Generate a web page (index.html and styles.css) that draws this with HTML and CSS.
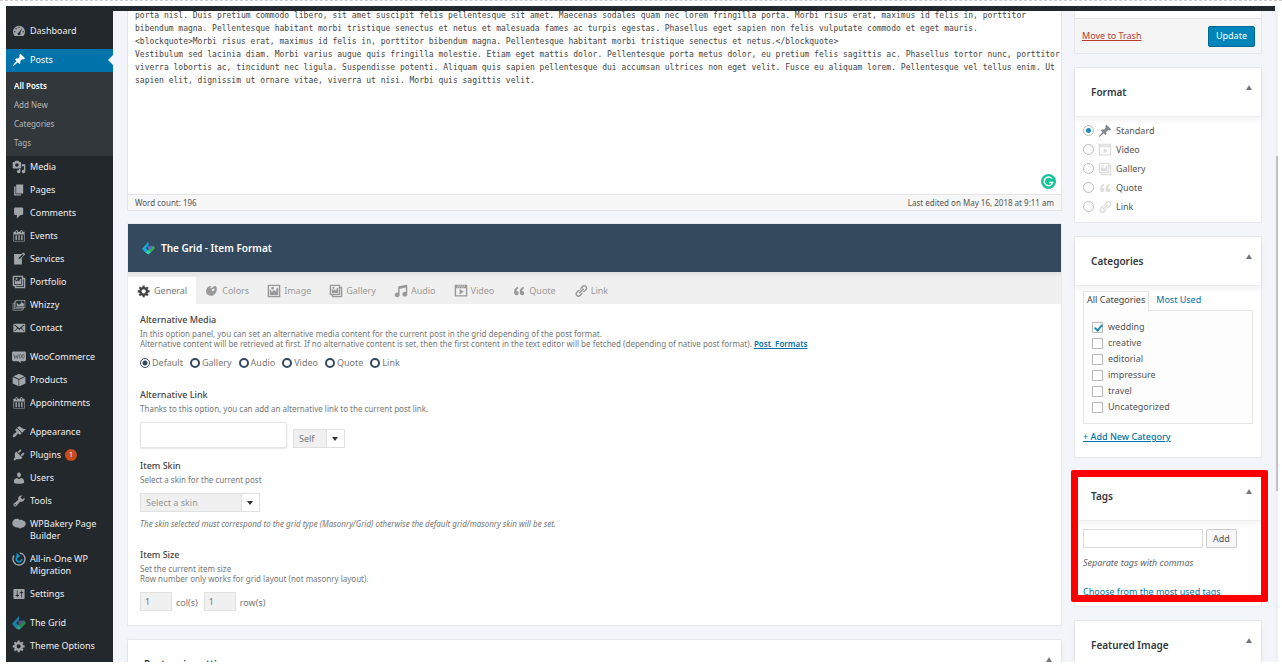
FILE: index.html
```html
<!DOCTYPE html>
<html lang="en">
<head>
    <meta charset="UTF-8">
    <title>Edit Post</title>
    <link rel="stylesheet" href="styles.css">
</head>
<body>
    <svg class="sprite" aria-hidden="true">
        <symbol id="i-dashboard" viewBox="0 0 20 20"><path fill-rule="evenodd" d="M3.8 17h12.4A8.6 8.6 0 1 0 3.8 17zM10 3.5a1 1 0 1 1 0 2 1 1 0 0 1 0-2zM5.8 5.4a1 1 0 1 1 0 2 1 1 0 0 1 0-2zM4 10a1 1 0 1 1 0 2 1 1 0 0 1 0-2zm12 0a1 1 0 1 1 0 2 1 1 0 0 1 0-2zm-1.2-4.4-3 7.4a2 2 0 1 1-2.2-1z"/></symbol>
        <symbol id="i-pin" viewBox="0 0 20 20"><path d="M10.44 3.02l1.82-1.82 6.36 6.35-1.83 1.82c-1.05-.68-2.48-.57-3.41.36l-.75.75c-.92.93-1.04 2.35-.35 3.41l-1.83 1.82-2.41-2.41-2.8 2.79c-.42.42-3.38 2.71-3.8 2.29s1.86-3.39 2.28-3.81l2.79-2.79L4.1 9.36l1.83-1.82c1.05.69 2.48.57 3.4-.36l.75-.75c.93-.92 1.05-2.35.36-3.41z"/></symbol>
        <symbol id="i-media" viewBox="0 0 20 20"><path d="M13 11V4c0-.55-.45-1-1-1h-1.67L9 1H5L3.67 3H2c-.55 0-1 .45-1 1v7c0 .55.45 1 1 1h10c.55 0 1-.45 1-1zM7 4.5c1.38 0 2.5 1.12 2.5 2.5S8.38 9.5 7 9.5 4.5 8.38 4.5 7 5.62 4.5 7 4.5zM14 6h5v10.5c0 1.38-1.12 2.5-2.5 2.5S14 17.88 14 16.5s1.12-2.5 2.5-2.5c.17 0 .34.02.5.05V9h-3V6zm-4 8.05V13h2v3.5c0 1.38-1.12 2.5-2.5 2.5S7 17.88 7 16.5 8.12 14 9.5 14c.17 0 .34.02.5.05z"/></symbol>
        <symbol id="i-pages" viewBox="0 0 20 20"><path d="M6 15V2h10v13H6zm-1 1h8v2H3V5h2v11z"/></symbol>
        <symbol id="i-comment" viewBox="0 0 20 20"><path d="M5 2h9c1.1 0 2 .9 2 2v7c0 1.1-.9 2-2 2h-2l-5 5v-5H5c-1.1 0-2-.9-2-2V4c0-1.1.9-2 2-2z"/></symbol>
        <symbol id="i-calendar" viewBox="0 0 20 20"><path d="M15 4h3v14H2V4h3V3c0-.83.67-1.5 1.5-1.5S8 2.17 8 3v1h4V3c0-.83.67-1.5 1.5-1.5S15 2.17 15 3v1zM6 3v2.5c0 .28.22.5.5.5s.5-.22.5-.5V3c0-.28-.22-.5-.5-.5S6 2.72 6 3zm7 0v2.5c0 .28.22.5.5.5s.5-.22.5-.5V3c0-.28-.22-.5-.5-.5s-.5.22-.5.5zm4 14V8H3v9h14zM7 16V9H5v7h2zm4 0V9H9v7h2zm4 0V9h-2v7h2z"/></symbol>
        <symbol id="i-write" viewBox="0 0 20 20"><path d="M16.89 1.2l1.41 1.41c.39.39.39 1.02 0 1.41L14 8.33V18H3V3h10.67l1.8-1.8c.4-.39 1.03-.4 1.42 0zm-5.66 8.48l5.37-5.36-1.42-1.42-5.36 5.37-.71 2.12z"/></symbol>
        <symbol id="i-gallery" viewBox="0 0 20 20"><path d="M16 4h1.96c.57 0 1.04.47 1.04 1.04v12.92c0 .57-.47 1.04-1.04 1.04H5.04C4.47 19 4 18.53 4 17.96V16H2.04C1.47 16 1 15.53 1 14.96V2.04C1 1.47 1.47 1 2.04 1h12.92c.57 0 1.04.47 1.04 1.04V4zM3 14h11V3H3v11zm5-8.5C8 4.67 7.33 4 6.5 4S5 4.67 5 5.5 5.67 7 6.5 7 8 6.33 8 5.5zm2 4.5s1-5 3-5v8H4V7c2 0 2 3 2 3s.33-2 2-2 2 2 2 2zm7 7V6h-1v8.96c0 .57-.47 1.04-1.04 1.04H6v1h11z"/></symbol>
        <symbol id="i-slides" viewBox="0 0 20 20"><path fill-rule="evenodd" d="M5 3h14v11h-2v2h-2v2H1V7h2V5h2zM6 4v9h12V4zM4 6v9h12v-1H5V6zM2 8v9h12v-1H3V8zM7 12V7.500c2 0 2 2 3 2s2-2.500 4-2.500 2 1 3 1v4zM14 5a1 1 0 1 1 0 2 1 1 0 0 1 0-2z"/></symbol>
        <symbol id="i-mail" viewBox="0 0 20 20"><path d="M19 14.500v-9c0-.83-.67-1.500-1.500-1.500H3.490c-.83 0-1.500.67-1.500 1.500v9c0 .83.67 1.500 1.500 1.500H17.500c.83 0 1.500-.67 1.500-1.500zm-1.310-9.110c.33.33.15.67-.03.84L13.600 9.950l3.900 4.060c.12.14.2.36.06.51-.13.16-.43.15-.56.05l-4.370-3.730-2.140 1.950-2.130-1.950-4.370 3.730c-.13.1-.43.11-.56-.05-.14-.15-.06-.37.06-.51l3.900-4.060-4.060-3.720c-.18-.17-.36-.51-.03-.84s.67-.17.95.07l6.240 5.040 6.250-5.040c.28-.24.61-.4.94-.07z"/></symbol>
        <symbol id="i-woo" viewBox="0 0 20 20"><path d="M2 2h16c1 0 2 1 2 2v10c0 1-1 2-2 2h-6l1 3-4-3H2c-1 0-2-1-2-2V4c0-1 1-2 2-2z"/><g fill="none" stroke="#5b6167" stroke-width="1.300"><path d="M2.500 6l1.500 6 2-4 1.500 4 1.500-6"/><ellipse cx="11.800" cy="9" rx="1.600" ry="2.600"/><ellipse cx="16" cy="9" rx="1.600" ry="2.600"/></g></symbol>
        <symbol id="i-box" viewBox="0 0 20 20"><path d="M10 1l8 3.500L10 8.500 2 4.500zM1 5.800l8.400 4V19L1 15zM19 5.800l-8.400 4V19L19 15z"/><path d="M1 5.500l9 4.500v9l9-4V5.500L10 10z" opacity=".6"/></symbol>
        <symbol id="i-brush" viewBox="0 0 20 20"><path d="M14.480 11.060L7.410 3.990l1.500-1.500c.5-.56 2.300-.47 3.510.32 1.210.8 1.430 1.280 2.910 2.100 1.180.64 2.450 1.260 4.450.85zm-.71.71L6.700 4.700 4.930 6.470c-.39.39-.39 1.020 0 1.410l1.060 1.060c.39.39.39 1.030 0 1.420-.6.6-1.430 1.110-2.210 1.690-.35.26-.7.53-1.010.84C1.430 14.230.4 16.080 1.400 17.070c.99 1 2.840-.03 4.180-1.360.31-.31.58-.66.85-1.020.57-.78 1.080-1.610 1.690-2.210.39-.39 1.020-.39 1.410 0l1.060 1.060c.39.39 1.020.39 1.410 0z"/></symbol>
        <symbol id="i-plug" viewBox="0 0 20 20"><path d="M13.110 4.360L9.870 7.600 8 5.730l3.240-3.240c.35-.34 1.050-.2 1.560.32.52.51.66 1.210.31 1.550zm-8 1.770l.91-1.120 9.010 9.010-1.190.84c-.71.71-2.630 1.160-3.820 1.160H6.140L4.900 17.260c-.59.59-1.540.59-2.120 0-.59-.58-.59-1.530 0-2.120l1.240-1.240v-3.880c0-1.130.4-3.190 1.090-3.890zm7.260 3.970l3.240-3.240c.34-.35 1.040-.21 1.550.31.52.51.66 1.210.31 1.550l-3.240 3.250z"/></symbol>
        <symbol id="i-user" viewBox="0 0 20 20"><path d="M10 9.250c-2.270 0-2.730-3.440-2.730-3.440C7 4.020 7.820 2 9.970 2c2.160 0 2.980 2.020 2.710 3.810 0 0-.41 3.440-2.680 3.440zm0 2.570L12.720 10c2.390 0 4.520 2.330 4.520 4.530v2.490s-3.650 1.130-7.240 1.130c-3.650 0-7.240-1.130-7.240-1.130v-2.490c0-2.250 1.940-4.480 4.470-4.480z"/></symbol>
        <symbol id="i-wrench" viewBox="0 0 20 20"><path d="M16.680 9.770c-1.340 1.340-3.300 1.670-4.950.99l-5.410 6.520c-.99.99-2.590.99-3.580 0s-.99-2.590 0-3.570l6.520-5.420c-.68-1.650-.35-3.610.99-4.950 1.280-1.280 3.120-1.620 4.720-1.060l-2.890 2.890 2.820 2.820 2.860-2.870c.53 1.580.18 3.390-1.080 4.650zM3.810 16.210c.4.39 1.040.39 1.430 0 .4-.4.4-1.040 0-1.430-.39-.4-1.030-.4-1.430 0-.39.39-.39 1.030 0 1.430z"/></symbol>
        <symbol id="i-bakery" viewBox="0 0 20 20"><path d="M6 3c2-1 4 0 5 1.500 2-1 4-.5 5 1 3 .5 4 3 3.500 5-.5 3-3 5-5.500 4.500-1 2-4 1.500-5 0-4 .5-8-1.500-8.500-5C0 6 3 3 6 3z"/></symbol>
        <symbol id="i-migrate" viewBox="0 0 20 20"><g fill="none" stroke-width="2"><path d="M3 5A8.500 8.500 0 0 0 10 18.500 8.500 8.500 0 0 0 18.500 10 8.500 8.500 0 0 0 11 1.500"/><path stroke="#0a9ad7" stroke-width="2.400" d="M14 10a4 4 0 1 1-4-4"/></g><path fill="#0a9ad7" stroke="none" d="M6 1l6 5-5 3z"/></symbol>
        <symbol id="i-sliders" viewBox="0 0 20 20"><path d="M18 16V4c0-.55-.45-1-1-1H3c-.55 0-1 .45-1 1v12c0 .55.45 1 1 1h14c.55 0 1-.45 1-1zM8 11h1c.55 0 1 .45 1 1s-.45 1-1 1H8v1.500c0 .28-.22.5-.5.5s-.5-.22-.5-.5V13H6c-.55 0-1-.45-1-1s.45-1 1-1h1V5.500c0-.28.22-.5.5-.5s.5.22.5.5V11zm5-2h-1c-.55 0-1-.45-1-1s.45-1 1-1h1V5.500c0-.28.22-.5.5-.5s.5.22.5.5V7h1c.55 0 1 .45 1 1s-.45 1-1 1h-1v5.500c0 .28-.22.5-.5.5s-.5-.22-.5-.5V9z"/></symbol>
        <symbol id="i-grid" viewBox="0 0 20 20"><path fill="#14a7dd" d="M10 0v6L6 10l3 3-4 4-5-6z"/><path fill="#35d0ba" d="M9 13l-4 4 5 3 4-4z"/><path fill="#2fb457" d="M20 10l-6 6.500L9 13l5-2 3-5z"/><path fill="#6a6fc0" d="M9 7.500L17 6l-3 5-4 2z"/></symbol>
        <symbol id="i-gear" viewBox="0 0 20 20"><path d="M18 12h-2.180c-.17.7-.44 1.350-.81 1.930l1.540 1.540-2.100 2.100-1.540-1.540c-.58.36-1.230.63-1.910.79V19H8v-2.180c-.68-.16-1.330-.43-1.910-.79l-1.540 1.540-2.120-2.120 1.540-1.540c-.36-.58-.63-1.230-.79-1.910H1V9.030h2.170c.16-.7.44-1.350.8-1.940L2.430 5.550l2.100-2.100 1.540 1.540c.58-.37 1.240-.64 1.930-.81V2h3v2.180c.68.16 1.330.43 1.910.79l1.540-1.540 2.120 2.120-1.540 1.540c.36.59.64 1.240.8 1.940H18V12zm-8.500 1.500c1.660 0 3-1.340 3-3s-1.340-3-3-3-3 1.340-3 3 1.340 3 3 3z"/></symbol>
        <symbol id="i-art" viewBox="0 0 20 20"><path d="M8.550 3.060c1.010.34-1.950 2.010-.1 3.130 1.040.63 3.310-2.220 4.450-2.860.97-.54 2.670-.65 3.530 1.230 1.090 2.380.14 8.570-3.790 11.060-3.970 2.500-8.970 1.230-10.700-2.660-2.010-4.530 3.120-11.090 6.610-9.900zm1.210 6.450c.73 1.640 4.700-.5 3.790-2.800-.59-1.490-4.480 1.250-3.790 2.800z"/></symbol>
        <symbol id="i-image" viewBox="0 0 20 20"><path d="M2.250 1h15.500c.69 0 1.250.56 1.250 1.250v15.500c0 .69-.56 1.250-1.250 1.250H2.250C1.560 19 1 18.440 1 17.750V2.250C1 1.560 1.560 1 2.250 1zM17 17V3H3v14h14zM10 6c0-1.100-.9-2-2-2s-2 .9-2 2 .9 2 2 2 2-.9 2-2zm3 5s0-6 3-6v10c0 .55-.45 1-1 1H5c-.55 0-1-.45-1-1V8c2 0 3 4 3 4s1-3 3-3 3 2 3 2z"/></symbol>
        <symbol id="i-audio" viewBox="0 0 20 20"><path d="M6.990 3.080l11.020-2c.55-.08.99.45.99 1V14.500c0 1.940-1.570 3.500-3.500 3.500S12 16.440 12 14.500c0-1.930 1.570-3.500 3.500-3.500.54 0 1.040.14 1.500.35V5.080l-9 2V16c-.24 1.700-1.740 3-3.500 3C2.570 19 1 17.440 1 15.500 1 13.570 2.570 12 4.500 12c.54 0 1.040.14 1.500.35V4.080c0-.55.44-.91.99-1z"/></symbol>
        <symbol id="i-video" viewBox="0 0 20 20"><path d="M2 1h16c.55 0 1 .45 1 1v16l-18-.02V2c0-.55.45-1 1-1zm4 1L4 5h1l2-3H6zm4 0H9L7 5h1zm3 0h-1l-2 3h1zm3 0h-1l-2 3h1zm1 14V6H3v10h14zM8 7l6 4-6 4V7z"/></symbol>
        <symbol id="i-quote" viewBox="0 0 20 20"><path d="M9.490 13.220c0-.74-.2-1.380-.61-1.900-.62-.78-1.830-.88-2.530-.72-.29-1.650 1.110-3.750 2.920-4.650L7.880 4c-2.730 1.300-5.420 4.280-4.960 8.050C3.210 14.430 4.590 16 6.540 16c.85 0 1.560-.25 2.120-.75s.83-1.180.83-2.030zm8.050 0c0-.74-.2-1.380-.61-1.900-.63-.78-1.830-.88-2.530-.72-.29-1.650 1.110-3.750 2.920-4.650L15.930 4c-2.730 1.300-5.410 4.280-4.950 8.050.29 2.380 1.660 3.950 3.610 3.950.85 0 1.560-.25 2.120-.75s.83-1.180.83-2.030z"/></symbol>
        <symbol id="i-link" viewBox="0 0 20 20"><path d="M17.740 2.760c1.680 1.690 1.680 4.410 0 6.100l-1.530 1.520c-1.120 1.120-2.700 1.470-4.140 1.090l2.620-2.610.76-.77.76-.76c.84-.84.84-2.200 0-3.040-.84-.85-2.200-.85-3.040 0l-.77.76-3.380 3.380c-.37-1.440-.02-3.020 1.100-4.140l1.520-1.530c1.690-1.680 4.420-1.680 6.100 0zM8.590 13.430l5.340-5.340c.42-.42.42-1.100 0-1.520-.44-.43-1.130-.39-1.530 0l-5.330 5.340c-.42.42-.42 1.100 0 1.520.44.43 1.130.39 1.520 0zm-.76 2.290l4.140-4.150c.38 1.440.03 3.020-1.090 4.140l-1.520 1.530c-1.690 1.680-4.410 1.680-6.100 0-1.680-1.680-1.680-4.420 0-6.100l1.530-1.520c1.120-1.120 2.700-1.470 4.140-1.100l-4.140 4.150c-.85.84-.85 2.200 0 3.050.84.84 2.200.84 3.040 0z"/></symbol>
    </svg>

    <div class="app">
        <div class="adminbar"></div>
        <div class="wrap">
            <nav class="menu">
                <a class="item first" href="#"><svg class="icon"><use href="#i-dashboard"/></svg>Dashboard</a>
                <a class="item current" href="#"><svg class="icon"><use href="#i-pin"/></svg>Posts</a>
                <div class="submenu">
                    <a class="active" href="#">All Posts</a>
                    <a href="#">Add New</a>
                    <a href="#">Categories</a>
                    <a href="#">Tags</a>
                </div>
                <a class="item" href="#"><svg class="icon"><use href="#i-media"/></svg>Media</a>
                <a class="item" href="#"><svg class="icon"><use href="#i-pages"/></svg>Pages</a>
                <a class="item" href="#"><svg class="icon"><use href="#i-comment"/></svg>Comments</a>
                <a class="item" href="#"><svg class="icon"><use href="#i-calendar"/></svg>Events</a>
                <a class="item" href="#"><svg class="icon"><use href="#i-write"/></svg>Services</a>
                <a class="item" href="#"><svg class="icon"><use href="#i-gallery"/></svg>Portfolio</a>
                <a class="item" href="#"><svg class="icon"><use href="#i-slides"/></svg>Whizzy</a>
                <a class="item" href="#"><svg class="icon"><use href="#i-mail"/></svg>Contact</a>
                <a class="item sep" href="#"><svg class="icon"><use href="#i-woo"/></svg>WooCommerce</a>
                <a class="item" href="#"><svg class="icon"><use href="#i-box"/></svg>Products</a>
                <a class="item" href="#"><svg class="icon"><use href="#i-calendar"/></svg>Appointments</a>
                <a class="item sep" href="#"><svg class="icon"><use href="#i-brush"/></svg>Appearance</a>
                <a class="item" href="#"><svg class="icon"><use href="#i-plug"/></svg>Plugins <span class="count">1</span></a>
                <a class="item" href="#"><svg class="icon"><use href="#i-user"/></svg>Users</a>
                <a class="item" href="#"><svg class="icon"><use href="#i-wrench"/></svg>Tools</a>
                <a class="item" href="#"><svg class="icon"><use href="#i-bakery"/></svg>WPBakery Page Builder</a>
                <a class="item" href="#"><svg class="icon icon-line"><use href="#i-migrate"/></svg>All-in-One WP Migration</a>
                <a class="item" href="#"><svg class="icon"><use href="#i-sliders"/></svg>Settings</a>
                <a class="item sep" href="#"><svg class="icon dim"><use href="#i-grid"/></svg>The Grid</a>
                <a class="item" href="#"><svg class="icon"><use href="#i-gear"/></svg>Theme Options</a>
            </nav>

            <main class="content">
                <div class="editor">
                    <textarea class="editor-text" aria-label="Post content" spellcheck="false">porta nisl. Duis pretium commodo libero, sit amet suscipit felis pellentesque sit amet. Maecenas sodales quam nec lorem fringilla porta. Morbi risus erat, maximus id felis in, porttitor
bibendum magna. Pellentesque habitant morbi tristique senectus et netus et malesuada fames ac turpis egestas. Phasellus eget sapien non felis vulputate commodo et eget mauris.
&lt;blockquote&gt;Morbi risus erat, maximus id felis in, porttitor bibendum magna. Pellentesque habitant morbi tristique senectus et netus.&lt;/blockquote&gt;
Vestibulum sed lacinia diam. Morbi varius augue quis fringilla molestie. Etiam eget mattis dolor. Pellentesque porta metus dolor, eu pretium felis sagittis ac. Phasellus tortor nunc, porttitor
viverra lobortis ac, tincidunt nec ligula. Suspendisse potenti. Aliquam quis sapien pellentesque dui accumsan ultrices non eget velit. Fusce eu aliquam lorem. Pellentesque vel tellus enim. Ut
sapien elit, dignissim ut ornare vitae, viverra ut nisi. Morbi quis sagittis velit.</textarea>
                    <svg class="checker" viewBox="0 0 16 16" aria-hidden="true"><circle cx="8" cy="8" r="8" fill="#15c39a"/><path d="M11.500 4.800A4.600 4.600 0 1 0 12.500 9H9" fill="none" stroke="#fff" stroke-width="1.500"/></svg>
                    <div class="editor-status"><span>Word count: 196</span><span>Last edited on May 16, 2018 at 9:11 am</span></div>
                </div>

                <section class="box">
                    <h2 class="grid-title"><svg class="logo"><use href="#i-grid"/></svg>The Grid - Item Format</h2>
                    <div class="tabs">
                        <button class="tab on"><svg class="icon"><use href="#i-gear"/></svg>General</button>
                        <button class="tab"><svg class="icon"><use href="#i-art"/></svg>Colors</button>
                        <button class="tab"><svg class="icon"><use href="#i-image"/></svg>Image</button>
                        <button class="tab"><svg class="icon"><use href="#i-gallery"/></svg>Gallery</button>
                        <button class="tab"><svg class="icon"><use href="#i-audio"/></svg>Audio</button>
                        <button class="tab"><svg class="icon"><use href="#i-video"/></svg>Video</button>
                        <button class="tab"><svg class="icon"><use href="#i-quote"/></svg>Quote</button>
                        <button class="tab"><svg class="icon"><use href="#i-link"/></svg>Link</button>
                    </div>
                    <div class="options">
                        <div class="option media">
                            <h3>Alternative Media</h3>
                            <p>In this option panel, you can set an alternative media content for the current post in the grid depending of the post format.<br>
                            Alternative content will be retrieved at first. If no alternative content is set, then the first content in the text editor will be fetched (depending of native post format). <a href="#">Post&nbsp; Formats</a></p>
                            <div class="radios">
                                <label><input type="radio" name="media" checked>Default</label>
                                <label><input type="radio" name="media">Gallery</label>
                                <label><input type="radio" name="media">Audio</label>
                                <label><input type="radio" name="media">Video</label>
                                <label><input type="radio" name="media">Quote</label>
                                <label><input type="radio" name="media">Link</label>
                            </div>
                        </div>
                        <div class="option altlink">
                            <h3>Alternative Link</h3>
                            <p>Thanks to this option, you can add an alternative link to the current post link.</p>
                            <div class="row">
                                <input class="url" type="text" aria-label="Alternative link">
                                <span class="select"><select aria-label="Link target"><option>Self</option></select></span>
                            </div>
                        </div>
                        <div class="option skin">
                            <h3>Item Skin</h3>
                            <p>Select a skin for the current post</p>
                            <span class="select wide"><select aria-label="Skin"><option>Select a skin</option></select></span>
                            <p class="note">The skin selected must correspond to the grid type (Masonry/Grid) otherwise the default grid/masonry skin will be set.</p>
                        </div>
                        <div class="option">
                            <h3>Item Size</h3>
                            <p>Set the current item size<br>Row number only works for grid layout (not masonry layout).</p>
                            <div class="size">
                                <input id="cols" type="text" value="1"><label for="cols">col(s)</label>
                                <input id="rows" type="text" value="1"><label for="rows">row(s)</label>
                            </div>
                        </div>
                    </div>
                </section>

                <section class="box">
                    <h2 class="box-title">Post main settings<button class="toggle" aria-label="Toggle panel"></button></h2>
                </section>
            </main>

            <aside class="side">
                <section class="box publish">
                    <a href="#">Move to Trash</a>
                    <button class="update">Update</button>
                </section>

                <section class="box">
                    <h2 class="box-title">Format<button class="toggle" aria-label="Toggle panel"></button></h2>
                    <div class="formats">
                        <label class="on"><input type="radio" name="format" checked><svg class="icon"><use href="#i-pin"/></svg>Standard</label>
                        <label><input type="radio" name="format"><svg class="icon"><use href="#i-video"/></svg>Video</label>
                        <label><input type="radio" name="format"><svg class="icon"><use href="#i-gallery"/></svg>Gallery</label>
                        <label><input type="radio" name="format"><svg class="icon"><use href="#i-quote"/></svg>Quote</label>
                        <label><input type="radio" name="format"><svg class="icon"><use href="#i-link"/></svg>Link</label>
                    </div>
                </section>

                <section class="box">
                    <h2 class="box-title">Categories<button class="toggle" aria-label="Toggle panel"></button></h2>
                    <div class="categories">
                        <div class="cat-tabs"><a class="on" href="#">All Categories</a><a href="#">Most Used</a></div>
                        <div class="cat-list">
                            <label><input type="checkbox" checked>wedding</label>
                            <label><input type="checkbox">creative</label>
                            <label><input type="checkbox">editorial</label>
                            <label><input type="checkbox">impressure</label>
                            <label><input type="checkbox">travel</label>
                            <label><input type="checkbox">Uncategorized</label>
                        </div>
                        <a class="add-cat" href="#">+ Add New Category</a>
                    </div>
                </section>

                <section class="box marked">
                    <h2 class="box-title">Tags<button class="toggle" aria-label="Toggle panel"></button></h2>
                    <div class="tags">
                        <div class="tag-row"><input type="text" aria-label="New tag"><button>Add</button></div>
                        <p>Separate tags with commas</p>
                        <a href="#">Choose from the most used tags</a>
                    </div>
                </section>

                <section class="box">
                    <h2 class="box-title">Featured Image<button class="toggle" aria-label="Toggle panel"></button></h2>
                </section>
            </aside>
            <div class="scrollbar"></div>
        </div>
    </div>
</body>
</html>
```

FILE: styles.css
```css
* {
    box-sizing: border-box;
}
body {
    margin: 0;
    height: 100vh;
    padding: 5px 4px 4px 6px;
    border-top: 1px dashed #ccc;
    background: #fff;
    font-family: "Noto Sans", "Open Sans", sans-serif;
    font-size: 9px;
    line-height: 12px;
    color: #555;
    overflow: hidden;
}
button, input, select, textarea {
    font: inherit;
    color: inherit;
    margin: 0;
}
a {
    color: #0073aa;
}
h2, h3, p {
    margin: 0;
}
.sprite {
    display: none;
}
.icon {
    width: 14px;
    height: 14px;
    fill: currentColor;
    flex: none;
}
.app {
    height: 100%;
    display: flex;
    flex-direction: column;
    overflow: hidden;
    background: #f4f5fb;
}
.adminbar {
    height: 5px;
    flex: none;
    background: #23282d;
    margin-right: 3px;
    position: relative;
    z-index: 1;
}
.wrap {
    display: flex;
    flex: 1;
    min-height: 0;
}

/* left menu */
.menu {
    width: 107px;
    flex: none;
    background: #23282d;
}
.item {
    display: flex;
    align-items: flex-start;
    gap: 4px;
    padding: 5px 8px 6px 6px;
    color: #eee;
    text-decoration: none;
}
.item .icon {
    margin: -1px 0;
    color: #a0a5aa;
}
.item .icon-line {
    stroke: #a0a5aa;
}
.item .dim {
    opacity: .7;
}
.item.first {
    padding-top: 14px;
    padding-bottom: 12px;
}
.item.sep {
    margin-top: 6px;
}
.item.current {
    position: relative;
    background: #0073aa;
    color: #fff;
}
.item.current .icon {
    color: #fff;
}
.item.current::after {
    content: "";
    position: absolute;
    right: 0;
    top: 6px;
    border: 5px solid transparent;
    border-right-color: #f4f5fb;
    border-left: 0;
}
.count {
    width: 12px;
    height: 12px;
    border-radius: 50%;
    background: #ca4a1f;
    color: #fff;
    font-size: 7px;
    text-align: center;
}
.submenu {
    padding: 4px 8px;
    background: #32373c;
}
.submenu a {
    display: block;
    line-height: 19px;
    font-size: 8px;
    color: #b4b9be;
    text-decoration: none;
}
.submenu .active {
    color: #fff;
    font-weight: 600;
}

/* main column */
.content {
    flex: 1;
    min-width: 0;
    padding-left: 14px;
}
.box {
    background: #fff;
    border: 1px solid #e8e9ee;
    margin-bottom: 13px;
}
.editor {
    position: relative;
    margin: -2px 0 12px;
    background: #fff;
    border: 1px solid #e5e5e5;
    border-top: 0;
}
.editor-text {
    display: block;
    width: 100%;
    height: 185px;
    padding: 0 0 0 7px;
    border: 0;
    resize: none;
    overflow: hidden;
    background: none;
    color: #444;
    font-family: "DejaVu Sans Mono", monospace;
    font-size: 8px;
    line-height: 13px;
    white-space: pre;
}
.checker {
    position: absolute;
    right: 5px;
    bottom: 21px;
    width: 15px;
    height: 15px;
}
.editor-status {
    display: flex;
    justify-content: space-between;
    padding: 1px 7px;
    border-top: 1px solid #e5e5e5;
    background: #f7f7f7;
    font-size: 8px;
    line-height: 13px;
}
.grid-title {
    display: flex;
    align-items: center;
    gap: 6px;
    height: 48px;
    padding-left: 14px;
    background: #34495e;
    color: #fff;
    font-size: 10px;
    font-weight: 600;
}
.logo {
    width: 13px;
    height: 14px;
}
.tabs {
    display: flex;
    padding-top: 5px;
    background: linear-gradient(#e2e2e4, #f0f0f0 6px);
}
.tab {
    display: flex;
    align-items: center;
    gap: 3px;
    height: 27px;
    padding: 0 9px;
    border: 0;
    background: none;
    color: #999;
}
.tab.on {
    background: #fff;
    color: #777;
}
.tab.on .icon {
    color: #444;
}
.options {
    padding: 10px 12px 14px;
    font-size: 8px;
    line-height: 10px;
    color: #777;
}
.options h3 {
    margin-bottom: 3px;
    font-size: 9px;
    line-height: 12px;
    font-weight: 500;
    color: #444;
}
.options a {
    font-weight: 600;
}
.media {
    height: 75px;
}
.altlink {
    height: 71px;
}
.skin {
    height: 89px;
}
.radios {
    display: flex;
    gap: 7px;
    margin-top: 8px;
    font-size: 9px;
    line-height: 12px;
}
.radios label {
    display: flex;
    align-items: center;
    gap: 2px;
}
.radios input {
    appearance: none;
    width: 10px;
    height: 10px;
    border: 2px solid #34495e;
    border-radius: 50%;
}
.radios input:checked {
    border-width: 1px;
    background: radial-gradient(#34495e 2px, #fff 3px);
}
.row {
    display: flex;
    align-items: flex-end;
    gap: 6px;
    margin-top: 8px;
}
.url {
    width: 147px;
    height: 26px;
    border: 1px solid #e5e5e5;
    border-radius: 2px;
    box-shadow: 0 1px 2px #e5e5e5;
}
.select {
    display: block;
    position: relative;
    width: 52px;
}
.select.wide {
    width: 120px;
    margin: 8px 0 7px;
    color: #999;
}
.select select {
    appearance: none;
    display: block;
    width: 100%;
    height: 19px;
    padding: 0 5px;
    border: 1px solid #e0e0e0;
    border-radius: 0;
    background: linear-gradient(to left, #fff 17px, #e0e0e0 17px, #e0e0e0 18px, #f0f0f0 18px);
    font-size: 9px;
}
.select::after {
    content: "";
    position: absolute;
    right: 7px;
    top: 8px;
    border: 3px solid transparent;
    border-top: 4px solid #333;
    border-bottom: 0;
}
.note {
    font-style: italic;
}
.size {
    display: flex;
    align-items: flex-end;
    gap: 4px;
    margin-top: 8px;
    font-size: 9px;
    line-height: 16px;
}
.size input {
    width: 32px;
    height: 19px;
    padding: 0 4px;
    border: 1px solid #e0e0e0;
    background: #f0f0f0;
}
.size label {
    margin-right: 2px;
}

/* panels */
.box-title {
    position: relative;
    display: flex;
    align-items: center;
    height: 49px;
    padding-left: 16px;
    border-bottom: 1px solid #eee;
    box-shadow: 0 3px 6px rgba(0, 0, 0, .06);
    font-size: 10px;
    font-weight: 600;
    color: #32373c;
}
.toggle {
    position: absolute;
    right: 9px;
    top: 16px;
    width: 6px;
    height: 6px;
    padding: 0;
    border: 0;
    background: #72777c;
    clip-path: polygon(50% 20%, 100% 100%, 0 100%);
}
.side {
    width: 188px;
    flex: none;
    margin: 0 13px 0 12px;
}
.publish {
    display: flex;
    align-items: center;
    justify-content: space-between;
    height: 43px;
    padding: 8px 6px 0 7px;
    border-top: 0;
    background: linear-gradient(#fff 7px, #e5e5e5 7px, #e5e5e5 8px, #f5f5f5 8px);
}
.publish a {
    color: #b83a32;
}
.update {
    height: 21px;
    padding: 0 7px;
    border: 1px solid #006799;
    border-radius: 2px;
    background: #0085ba;
    color: #fff;
}
.formats {
    padding: 4px 8px 6px;
}
.formats label {
    display: flex;
    align-items: center;
    gap: 4px;
    height: 19px;
}
.formats .icon {
    color: #ddd;
}
.formats .on .icon {
    color: #82878c;
}
.formats input {
    appearance: none;
    width: 11px;
    height: 11px;
    border: 1px solid #bbb;
    border-radius: 50%;
}
.formats input:checked {
    background: radial-gradient(#1e8cbe 2px, #fff 3px);
}
.categories {
    padding: 5px 8px 14px;
}
.cat-tabs {
    display: flex;
}
.cat-tabs a {
    padding: 2px 3px 4px;
    border: 1px solid transparent;
    border-bottom: 0;
    text-decoration: none;
}
.cat-tabs .on {
    position: relative;
    z-index: 1;
    margin: 0 3px -1px 0;
    padding-bottom: 5px;
    border-color: #e5e5e5;
    background: #fdfdfd;
    color: #444;
}
.cat-list {
    margin-bottom: 7px;
    padding: 8px;
    border: 1px solid #e5e5e5;
    background: #fdfdfd;
}
.cat-list label {
    display: flex;
    align-items: center;
    gap: 5px;
    height: 16px;
}
.cat-list input {
    appearance: none;
    width: 11px;
    height: 11px;
    border: 1px solid #bbb;
    background: #fff;
}
.cat-list input:checked::after {
    content: "";
    display: block;
    width: 3px;
    height: 6px;
    margin-left: 3px;
    border: solid #1e8cbe;
    border-width: 0 2px 2px 0;
    transform: rotate(40deg);
}
.add-cat {
    font-weight: 500;
}
.marked {
    position: relative;
    height: 136px;
}
.marked::after {
    content: "";
    position: absolute;
    z-index: 1;
    inset: -2px -7px 4px -4px;
    border: 7px solid #f00;
    border-radius: 2px;
}
.tags {
    padding: 8px;
}
.tag-row {
    display: flex;
    gap: 3px;
}
.tag-row input {
    width: 120px;
    height: 19px;
    border: 1px solid #ddd;
}
.tag-row button {
    width: 31px;
    height: 19px;
    padding: 0;
    border: 1px solid #ccc;
    border-radius: 2px;
    background: #f7f7f7;
}
.tags p {
    margin: 9px 0 17px;
    font-style: italic;
    color: #666;
}
.tags a {
    text-decoration: none;
}
.scrollbar {
    width: 3px;
    flex: none;
    background: linear-gradient(#c1c1c1, #c1c1c1) 1px 145px / 2px 335px no-repeat #f1f1f1;
}
```
